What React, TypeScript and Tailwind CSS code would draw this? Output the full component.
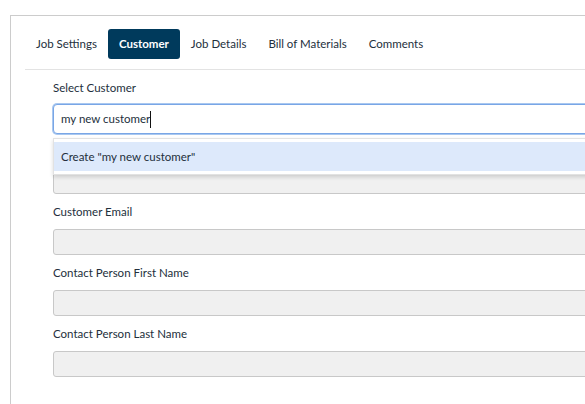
import React from 'react';

const tabs = ['Job Settings', 'Customer', 'Job Details', 'Bill of Materials', 'Comments'];

const Field = ({ label }: { label?: string }) => (
  <div className="mb-[10px]">
    <div className="h-[16px] text-[11.5px] leading-[16px]">{label}</div>
    <div className="mt-[9px] h-[26px] rounded-[3px] border border-[#c8c8c8] bg-[#f0f0f0]" />
  </div>
);

export default function App() {
  const query = 'my new customer';

  return (
    <div
      className="w-[585px] h-[404px] overflow-hidden bg-white pt-[15px] pl-[10px] text-[#232f3c]"
      style={{ fontFamily: 'Lato, "Noto Sans", sans-serif' }}
    >
      <div className="w-[720px] h-[420px] border-l border-t border-[#cccccc] pt-[13px] px-[14px]">
        {/* Tab bar */}
        <div className="flex">
          {tabs.map((tab) => (
            <div
              key={tab}
              className={
                tab === 'Customer'
                  ? 'h-[30px] px-[11px] flex items-center rounded-[3px] bg-[#003a5c] text-white font-bold text-[11.5px]'
                  : 'h-[30px] px-[11px] flex items-center text-[11.5px]'
              }
            >
              {tab}
            </div>
          ))}
        </div>
        <div className="mt-[10px] border-t border-[#e3e3e3]" />

        {/* Customer form */}
        <div className="px-[28px] pt-[10px]">
          <div className="relative mb-[9px]">
            <div className="text-[11.5px] leading-[16px]">Select Customer</div>
            <div className="mt-[8px] h-[30px] rounded-[4px] border border-[#79a6e6] shadow-[0_0_0_1px_#a9c8f0] bg-white flex items-center pl-[7px] text-[11.5px]">
              <span>{query}</span>
              <span className="w-px h-[17px] bg-[#111]" />
            </div>
            {/* Suggestions dropdown */}
            <div className="absolute left-0 right-0 top-[58px] z-10 bg-white border border-[#e2e2e2] py-[3px] shadow-[0_2px_4px_rgba(0,0,0,0.15)]">
              <div className="h-[29px] flex items-center px-[7px] bg-[#dde9fb] text-[11.5px]">
                Create "{query}"
              </div>
            </div>
          </div>

          {/* Customer name field, covered by the dropdown while it is open */}
          <Field />
          <Field label="Customer Email" />
          <Field label="Contact Person First Name" />
          <Field label="Contact Person Last Name" />
        </div>
      </div>
    </div>
  );
}
